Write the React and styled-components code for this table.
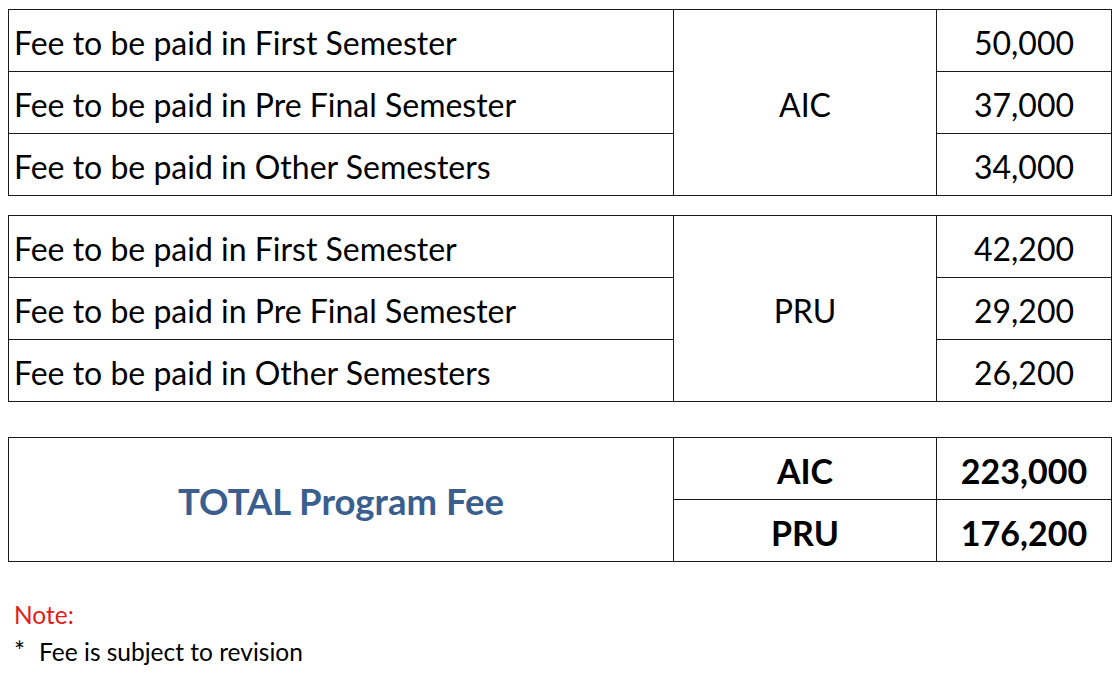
import React from "react";
import styled, { createGlobalStyle } from "styled-components";

const GlobalStyle = createGlobalStyle`
  body {
    margin: 0;
    background: #ffffff;
    font-family: Lato, "Open Sans", sans-serif;
    color: #000;
  }
`;

const Page = styled.div`
  width: 1116px;
  padding: 9px 0 0 8px;
  box-sizing: border-box;
`;

const FeeTable = styled.table`
  border-collapse: collapse;
  width: 1103px;
  table-layout: fixed;
  margin-bottom: ${(p) => p.$gap || 0}px;
`;

const Cell = styled.td`
  border: 1px solid #1a1a1a;
  height: 57px;
  padding: 4px 0 0 ${(p) => (p.$left ? "5px" : "0")};
  font-size: ${(p) => (p.$bold ? "34px" : "32px")};
  line-height: 1;
  text-align: ${(p) => (p.$left ? "left" : "center")};
  font-weight: ${(p) => (p.$bold ? 700 : 400)};
  vertical-align: middle;
  white-space: nowrap;
`;

const TotalLabel = styled.td`
  border: 1px solid #1a1a1a;
  text-align: center;
  font-size: 36.5px;
  font-weight: 700;
  color: #3a5f8f;
  padding-top: 4px;
  line-height: 1;
`;

const Notes = styled.div`
  padding: 34px 0 0 6px;
  font-size: 24.5px;
  line-height: 37px;
`;

const NoteTitle = styled.div`
  color: #e31b1b;
`;

const NoteItem = styled.div`
  display: flex;
  gap: 14px;
`;

const Star = styled.span`
  font-size: 26px;
`;

const blocks = [
  {
    name: "AIC",
    fees: ["50,000", "37,000", "34,000"],
  },
  {
    name: "PRU",
    fees: ["42,200", "29,200", "26,200"],
  },
];

const labels = [
  "Fee to be paid in First Semester",
  "Fee to be paid in Pre Final Semester",
  "Fee to be paid in Other Semesters",
];

function Cols() {
  return (
    <colgroup>
      <col style={{ width: 665 }} />
      <col style={{ width: 263 }} />
      <col style={{ width: 175 }} />
    </colgroup>
  );
}

export default function App() {
  return (
    <>
      <GlobalStyle />
      <Page>
        {blocks.map((b, bi) => (
          <FeeTable key={b.name} $gap={bi === 0 ? 19 : 35}>
            <Cols />
            <tbody>
              {labels.map((label, i) => (
                <tr key={label}>
                  <Cell $left>{label}</Cell>
                  {i === 0 && <Cell rowSpan={3}>{b.name}</Cell>}
                  <Cell>{b.fees[i]}</Cell>
                </tr>
              ))}
            </tbody>
          </FeeTable>
        ))}
        <FeeTable>
          <Cols />
          <tbody>
            <tr>
              <TotalLabel rowSpan={2}>TOTAL Program Fee</TotalLabel>
              <Cell $bold>AIC</Cell>
              <Cell $bold>223,000</Cell>
            </tr>
            <tr>
              <Cell $bold>PRU</Cell>
              <Cell $bold>176,200</Cell>
            </tr>
          </tbody>
        </FeeTable>
        <Notes>
          <NoteTitle>Note:</NoteTitle>
          <NoteItem>
            <Star>*</Star>
            <span>Fee is subject to revision</span>
          </NoteItem>
        </Notes>
      </Page>
    </>
  );
}
